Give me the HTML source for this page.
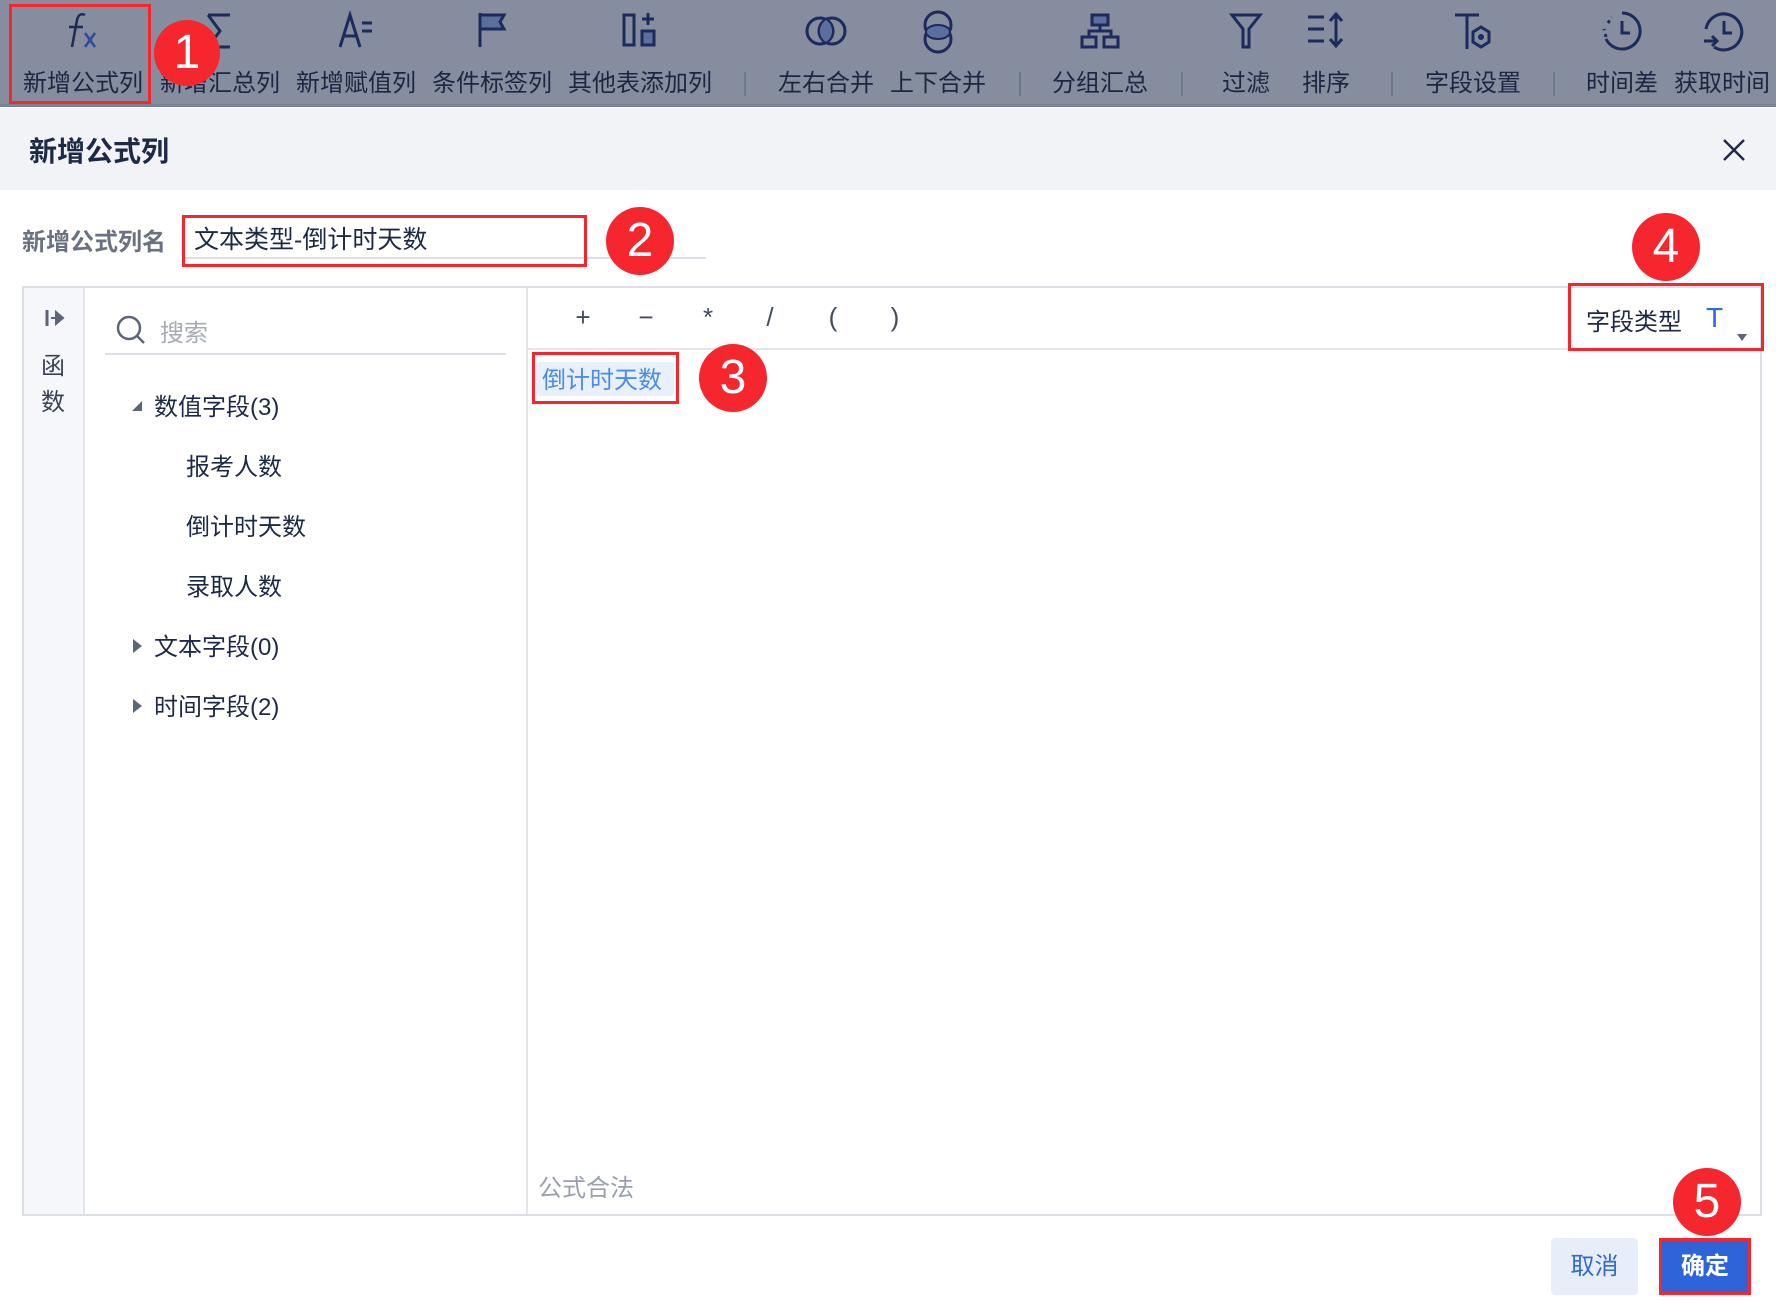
<!DOCTYPE html>
<html><head><meta charset="utf-8"><style>
*{margin:0;padding:0;box-sizing:border-box}
body{width:1776px;height:1300px;background:#fff;position:relative;overflow:hidden;font-family:"Liberation Sans","Noto Sans CJK SC",sans-serif;color:#1e2a45}
.a{position:absolute}
.tb{left:0;top:0;width:1776px;height:107px;background:#858d9e;border-bottom:3px solid #7a8293}
.lbl{position:absolute;top:63px;font-size:24px;color:#1c2642;white-space:nowrap;transform:translateX(-50%)}
.ic{position:absolute;top:9px;transform:translateX(-50%)}
.sep{position:absolute;top:72px;width:2px;height:24px;background:#6f788a}
.circ{position:absolute;border-radius:50%;background:#f5262d;color:#fff;font-size:48px;text-align:center;font-family:"Liberation Sans",sans-serif}
.rb{position:absolute;border:3px solid #f5262d}
.tree{position:absolute;font-size:24px;color:#1e2a45;white-space:nowrap}
.op{position:absolute;top:302px;font-size:26px;color:#444c5c;transform:translateX(-50%)}
</style></head><body>
<div class="a tb"></div>
<svg class="ic" style="left:83px" width="44" height="44" viewBox="0 0 44 44"><path d="M24 6c-4-2-7 0-8 5L11 38" fill="none" stroke="#1c2a5c" stroke-width="2.5"/><path d="M8 18H22" stroke="#1c2a5c" stroke-width="2.5"/><path d="M24 24L34 38M34 24L24 38" stroke="#2c4a9a" stroke-width="2.5"/></svg>
<svg class="ic" style="left:220px" width="44" height="44" viewBox="0 0 44 44"><path d="M10 6H32M10 6L22 22L10 38H32" fill="none" stroke="#1c2a5c" stroke-width="3"/></svg>
<svg class="ic" style="left:356px" width="44" height="44" viewBox="0 0 44 44"><path d="M6 38L16 6L26 38M10 27H22M28 14H38M28 22H38" fill="none" stroke="#1c2a5c" stroke-width="3"/></svg>
<svg class="ic" style="left:492px" width="44" height="44" viewBox="0 0 44 44"><path d="M10 4V38M10 6H34L30 13L34 20H10" fill="#5a6f9e" stroke="#1c2a5c" stroke-width="3"/></svg>
<svg class="ic" style="left:640px" width="44" height="44" viewBox="0 0 44 44"><rect x="6" y="6" width="10" height="30" fill="none" stroke="#1c2a5c" stroke-width="3"/><rect x="24" y="22" width="12" height="14" fill="#5a6f9e" stroke="#1c2a5c" stroke-width="3"/><path d="M30 4V16M24 10H36" stroke="#1c2a5c" stroke-width="3"/></svg>
<svg class="ic" style="left:826px" width="48" height="44" viewBox="0 0 48 44"><circle cx="18" cy="22" r="13" fill="none" stroke="#1c2a5c" stroke-width="3"/><circle cx="30" cy="22" r="13" fill="none" stroke="#1c2a5c" stroke-width="3"/><path d="M24 11a13 13 0 0 1 0 22a13 13 0 0 1 0-22z" fill="#5a6f9e"/></svg>
<svg class="ic" style="left:938px" width="44" height="48" viewBox="0 0 44 48"><circle cx="22" cy="16" r="13" fill="none" stroke="#1c2a5c" stroke-width="3"/><circle cx="22" cy="30" r="13" fill="none" stroke="#1c2a5c" stroke-width="3"/><ellipse cx="22" cy="23" rx="12" ry="7" fill="#5a6f9e" stroke="#1c2a5c" stroke-width="2"/></svg>
<svg class="ic" style="left:1100px" width="44" height="44" viewBox="0 0 44 44"><rect x="14" y="6" width="16" height="10" fill="#5a6f9e" stroke="#1c2a5c" stroke-width="3"/><rect x="4" y="28" width="14" height="10" fill="none" stroke="#1c2a5c" stroke-width="3"/><rect x="26" y="28" width="14" height="10" fill="none" stroke="#1c2a5c" stroke-width="3"/><path d="M22 16V22M11 28V22H33V28" fill="none" stroke="#1c2a5c" stroke-width="3"/></svg>
<svg class="ic" style="left:1246px" width="44" height="44" viewBox="0 0 44 44"><path d="M8 6H36L25 20V38H19V20Z" fill="none" stroke="#1c2a5c" stroke-width="3"/></svg>
<svg class="ic" style="left:1326px" width="44" height="44" viewBox="0 0 44 44"><path d="M4 8H20M4 20H20M4 32H20M32 6V36M26 12L32 5L38 12M26 30L32 37L38 30" fill="none" stroke="#1c2a5c" stroke-width="3"/></svg>
<svg class="ic" style="left:1473px" width="44" height="44" viewBox="0 0 44 44"><path d="M4 6H28M16 6V40" stroke="#1c2a5c" stroke-width="3"/><path d="M30 18L38 23V33L30 38L22 33V23Z" fill="none" stroke="#1c2a5c" stroke-width="3"/><circle cx="30" cy="28" r="3" fill="#1c2a5c"/></svg>
<svg class="ic" style="left:1622px" width="44" height="44" viewBox="0 0 44 44"><path d="M22 4a18 18 0 1 1-16 26" fill="none" stroke="#1c2a5c" stroke-width="3"/><path d="M22 12V24H30" fill="none" stroke="#1c2a5c" stroke-width="3"/><path d="M6 28L4 20M8 14L12 8" stroke="#1c2a5c" stroke-width="3" stroke-dasharray="3 4"/></svg>
<svg class="ic" style="left:1722px" width="44" height="44" viewBox="0 0 44 44"><path d="M6 20a18 18 0 1 1 8 18" fill="none" stroke="#1c2a5c" stroke-width="3"/><path d="M24 12V24H32M4 32H16M12 27L17 32L12 37" fill="none" stroke="#1c2a5c" stroke-width="3"/></svg>
<div class="lbl" style="left:83px">新增公式列</div>
<div class="lbl" style="left:220px">新增汇总列</div>
<div class="lbl" style="left:356px">新增赋值列</div>
<div class="lbl" style="left:492px">条件标签列</div>
<div class="lbl" style="left:640px">其他表添加列</div>
<div class="sep" style="left:744px"></div>
<div class="lbl" style="left:826px">左右合并</div>
<div class="lbl" style="left:938px">上下合并</div>
<div class="sep" style="left:1019px"></div>
<div class="lbl" style="left:1100px">分组汇总</div>
<div class="sep" style="left:1181px"></div>
<div class="lbl" style="left:1246px">过滤</div>
<div class="lbl" style="left:1326px">排序</div>
<div class="sep" style="left:1391px"></div>
<div class="lbl" style="left:1473px">字段设置</div>
<div class="sep" style="left:1553px"></div>
<div class="lbl" style="left:1622px">时间差</div>
<div class="lbl" style="left:1722px">获取时间</div>
<div class="rb" style="left:9px;top:4px;width:142px;height:100px"></div>
<div class="circ" style="left:154px;top:20px;width:66px;height:66px;line-height:66px">1</div>

<div class="a" style="left:0;top:108px;width:1776px;height:82px;background:#f2f3f7"></div>
<div class="a" style="left:29px;top:130px;font-size:28px;font-weight:bold;color:#1e2a45">新增公式列</div>
<svg class="a" style="left:1722px;top:138px" width="24" height="24" viewBox="0 0 24 24"><path d="M2 2L22 22M22 2L2 22" stroke="#1e2a45" stroke-width="2.4"/></svg>

<div class="a" style="left:22px;top:222px;font-size:24px;font-weight:bold;color:#6a7282">新增公式列名</div>
<div class="a" style="left:182px;top:257px;width:524px;height:2px;background:#dde0e6"></div>
<div class="a" style="left:194px;top:220px;font-size:25px;color:#1e2a45">文本类型-倒计时天数</div>
<div class="rb" style="left:182px;top:215px;width:405px;height:52px"></div>
<div class="circ" style="left:606px;top:207px;width:68px;height:68px;line-height:68px">2</div>

<div class="a" style="left:22px;top:286px;width:1740px;height:930px;border:2px solid #dcdfe5"></div>
<div class="a" style="left:24px;top:288px;width:61px;height:926px;background:#f6f7fb;border-right:2px solid #e4e6ec"></div>
<svg class="a" style="left:44px;top:308px" width="22" height="20" viewBox="0 0 22 20"><path d="M3 2V18" stroke="#5d6578" stroke-width="3"/><path d="M7 10H14M12 4L19 10L12 16Z" fill="#5d6578" stroke="#5d6578" stroke-width="2"/></svg>
<div class="a" style="left:41px;top:349px;font-size:24px;color:#3a4256;line-height:36px;width:26px">函<br>数</div>
<div class="a" style="left:526px;top:288px;width:2px;height:926px;background:#e4e6ec"></div>
<svg class="a" style="left:115px;top:314px" width="32" height="32" viewBox="0 0 32 32"><circle cx="14" cy="14" r="11" fill="none" stroke="#5d6578" stroke-width="2.5"/><path d="M22 22L29 29" stroke="#5d6578" stroke-width="2.5"/></svg>
<div class="a" style="left:160px;top:313px;font-size:24px;color:#a6abb6">搜索</div>
<div class="a" style="left:105px;top:353px;width:401px;height:2px;background:#dcdfe5"></div>
<svg class="a" style="left:131px;top:400px" width="12" height="12"><path d="M11 1V11H1Z" fill="#5d6578"/></svg>
<div class="tree" style="left:154px;top:387px">数值字段(3)</div>
<div class="tree" style="left:186px;top:447px">报考人数</div>
<div class="tree" style="left:186px;top:507px">倒计时天数</div>
<div class="tree" style="left:186px;top:567px">录取人数</div>
<svg class="a" style="left:132px;top:638px" width="12" height="16"><path d="M1 1L10 8L1 15Z" fill="#5d6578"/></svg>
<div class="tree" style="left:154px;top:627px">文本字段(0)</div>
<svg class="a" style="left:132px;top:698px" width="12" height="16"><path d="M1 1L10 8L1 15Z" fill="#5d6578"/></svg>
<div class="tree" style="left:154px;top:687px">时间字段(2)</div>
<div class="a" style="left:528px;top:348px;width:1232px;height:2px;background:#e4e6ec"></div>
<div class="op" style="left:583px">+</div>
<div class="op" style="left:646px">−</div>
<div class="op" style="left:708px">*</div>
<div class="op" style="left:770px">/</div>
<div class="op" style="left:833px">(</div>
<div class="op" style="left:895px">)</div>
<div class="a" style="left:1586px;top:302px;font-size:24px;color:#1e2a45">字段类型</div>
<div class="a" style="left:1706px;top:302px;font-size:28px;color:#2f6ad6">T</div>
<svg class="a" style="left:1737px;top:334px" width="10" height="8"><path d="M0 0H10L5 7Z" fill="#5d6578"/></svg>
<div class="rb" style="left:1568px;top:283px;width:196px;height:68px"></div>
<div class="circ" style="left:1632px;top:213px;width:68px;height:68px;line-height:68px">4</div>
<div class="a" style="left:536px;top:362px;width:138px;height:34px;background:#e8f0fc;border-radius:3px"></div>
<div class="a" style="left:542px;top:360px;font-size:24px;color:#4c8ce8">倒计时天数</div>
<div class="rb" style="left:532px;top:352px;width:147px;height:52px"></div>
<div class="circ" style="left:699px;top:344px;width:68px;height:68px;line-height:68px">3</div>
<div class="a" style="left:538px;top:1168px;font-size:24px;color:#9aa0ac">公式合法</div>
<div class="a" style="left:1551px;top:1238px;width:87px;height:57px;background:#e8eef9;border-radius:4px;color:#2f6ad6;font-size:24px;text-align:center;line-height:57px">取消</div>
<div class="a" style="left:1659px;top:1238px;width:92px;height:57px;background:#2f63d8;border:3px solid #f5262d;color:#fff;font-size:24px;text-align:center;line-height:51px;font-weight:bold">确定</div>
<div class="circ" style="left:1673px;top:1168px;width:68px;height:68px;line-height:68px">5</div>
</body></html>
